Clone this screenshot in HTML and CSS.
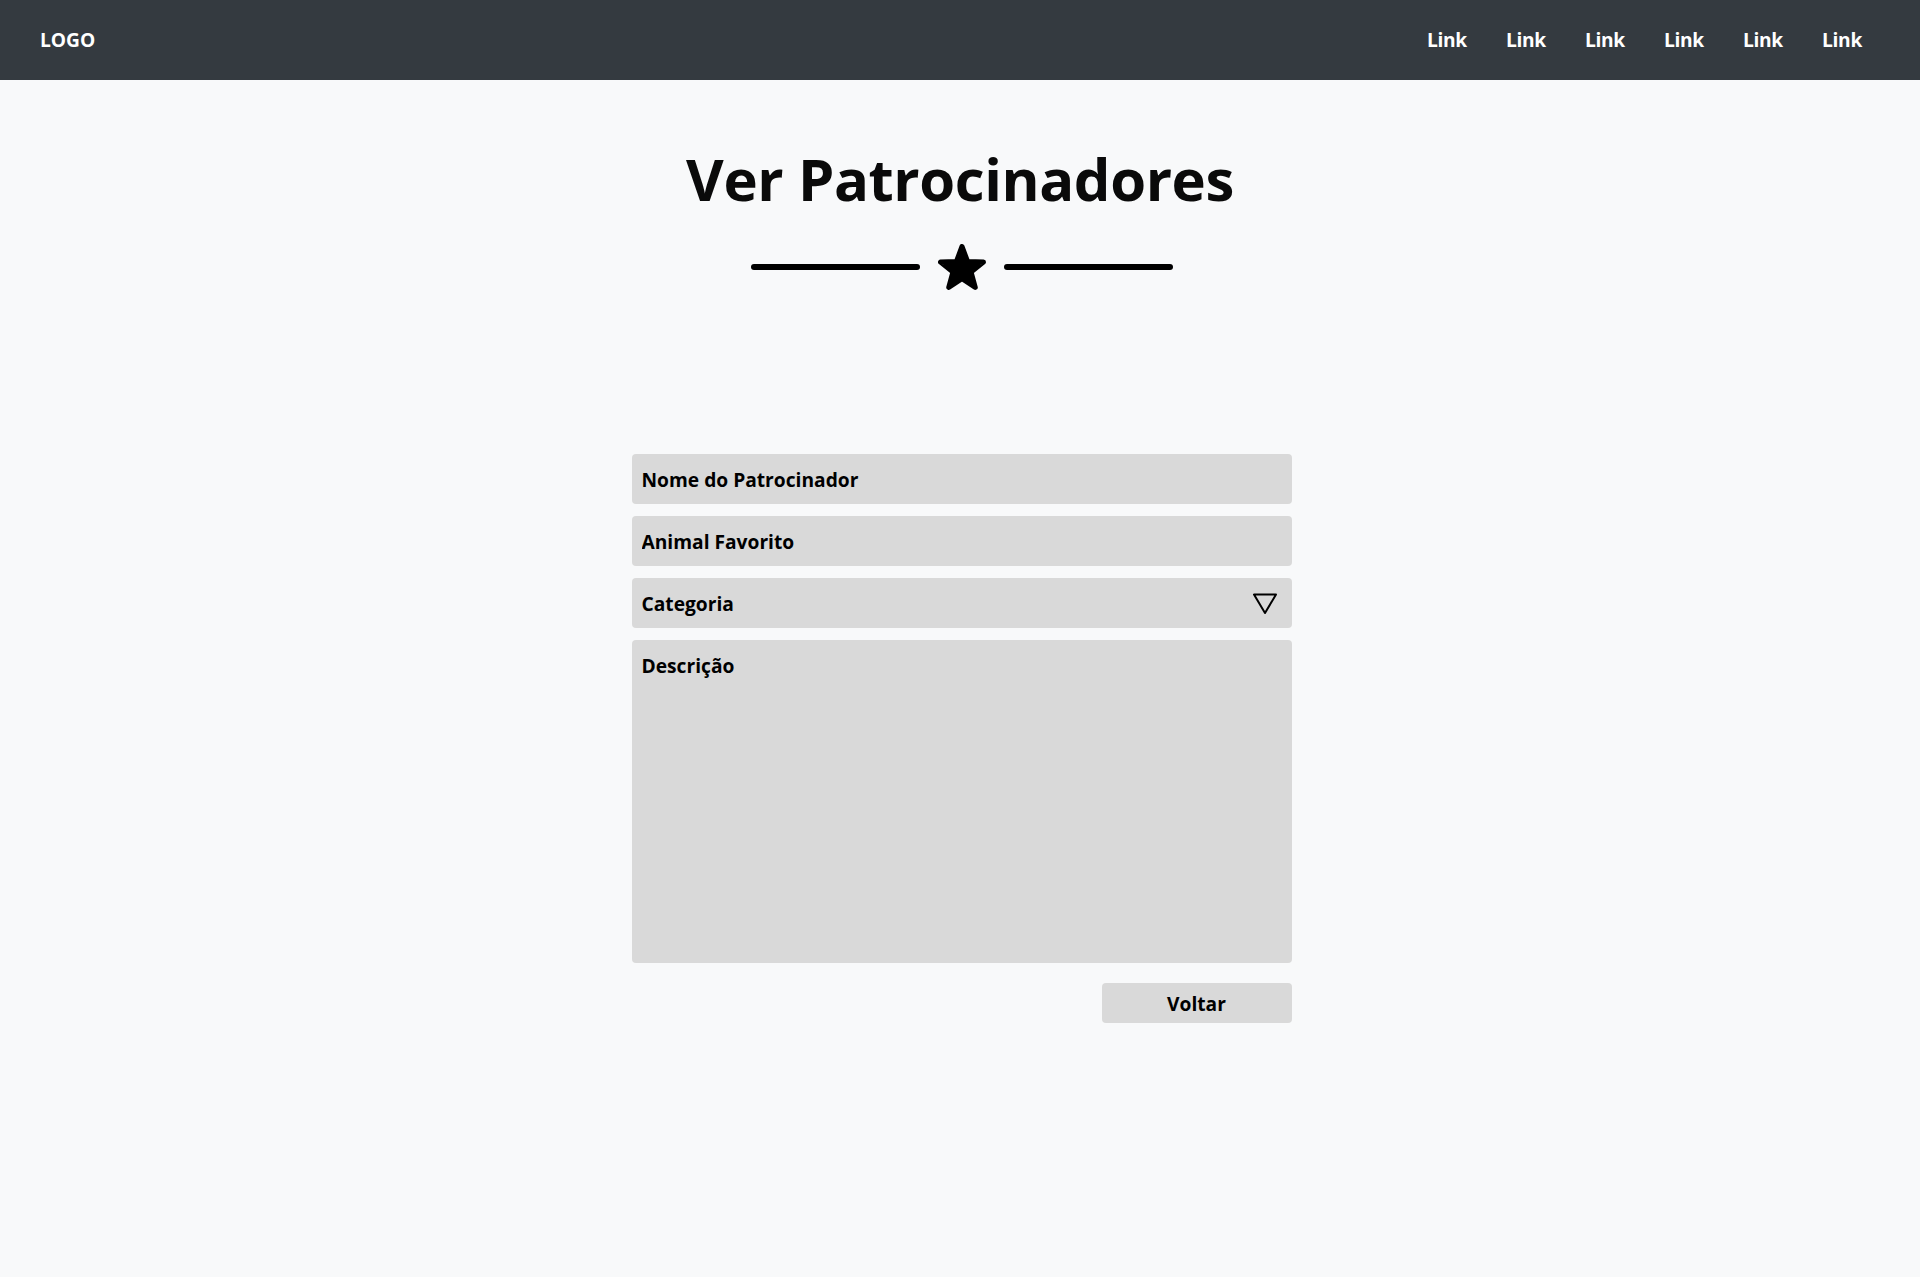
FILE: index.html
```html
<!DOCTYPE html>
<html lang="pt">
<head>
<meta charset="utf-8">
<title>Ver Patrocinadores</title>
<link rel="stylesheet" href="styles.css">
</head>
<body>
<header class="navbar">
  <a class="logo" href="#">LOGO</a>
  <nav class="nav-links">
    <a href="#">Link</a>
    <a href="#">Link</a>
    <a href="#">Link</a>
    <a href="#">Link</a>
    <a href="#">Link</a>
    <a href="#">Link</a>
  </nav>
</header>
<main class="page">
  <h1 class="title">Ver Patrocinadores</h1>
  <div class="divider">
    <span class="divider-line"></span>
    <svg class="divider-star" viewBox="0 0 48 46" width="48" height="46" aria-hidden="true">
      <polygon points="24,2.5 29.58,17.41 45.49,18.12 33.04,28.04 37.28,43.38 24,34.6 10.72,43.38 14.96,28.04 2.51,18.12 18.42,17.41" fill="#000" stroke="#000" stroke-width="5" stroke-linejoin="round"/>
    </svg>
    <span class="divider-line"></span>
  </div>
  <form class="form">
    <input class="field" type="text" placeholder="Nome do Patrocinador">
    <input class="field" type="text" placeholder="Animal Favorito">
    <div class="field field-select">
      <span>Categoria</span>
      <svg class="select-arrow" viewBox="0 0 26 23" width="26" height="23" aria-hidden="true">
        <polygon points="2,2.5 24,2.5 13,21" fill="none" stroke="#000" stroke-width="2" stroke-linejoin="round"/>
      </svg>
    </div>
    <textarea class="field field-textarea" placeholder="Descrição"></textarea>
    <div class="actions">
      <button class="btn" type="button">Voltar</button>
    </div>
  </form>
</main>
</body>
</html>
```
FILE: styles.css
```css
* {
  box-sizing: border-box;
}

html, body {
  margin: 0;
  padding: 0;
}

body {
  background: #f8f9fa;
  min-height: 1277px;
  font-family: "Open Sans", "Lato", sans-serif;
  font-weight: 700;
  color: #000;
}

.navbar {
  height: 80px;
  background: #343a40;
  display: flex;
  align-items: center;
  justify-content: space-between;
  padding: 0 38.5px 0 40px;
}

.logo {
  color: #fff;
  text-decoration: none;
  font-size: 19.2px;
  font-weight: 700;
  margin-top: -1px;
}

.nav-links {
  display: flex;
  margin-top: -1px;
}

.nav-links a {
  color: #fff;
  text-decoration: none;
  font-size: 19.2px;
  font-weight: 700;
  letter-spacing: -0.3px;
  padding: 0 19.5px;
}

.page {
  display: flex;
  flex-direction: column;
  align-items: center;
  padding-top: 63px;
}

.title {
  margin: 0;
  font-size: 58px;
  line-height: 72px;
  letter-spacing: -0.4px;
  font-weight: 700;
  color: #0a0a0a;
}

.divider {
  display: flex;
  align-items: center;
  gap: 18px;
  margin-top: 29px;
  margin-left: 3px;
}

.divider-line {
  width: 169px;
  height: 6px;
  border-radius: 3px;
  background: #000;
}

.divider-star {
  display: block;
}

.form {
  width: 660px;
  margin-top: 164px;
  margin-left: 3px;
  display: flex;
  flex-direction: column;
  gap: 12px;
}

.field {
  display: block;
  width: 100%;
  height: 50px;
  border: none;
  border-radius: 4px;
  background: #d9d9d9;
  padding: 0 10px;
  font-family: inherit;
  font-size: 19.2px;
  font-weight: 700;
  color: #000;
  outline: none;
}

.field::placeholder {
  color: #000;
  opacity: 1;
}

.field-select {
  display: flex;
  align-items: center;
  justify-content: space-between;
  padding-right: 14px;
}

.select-arrow {
  display: block;
}

.field-textarea {
  height: 323px;
  padding-top: 14px;
  resize: none;
  line-height: 1.2;
}

.actions {
  display: flex;
  justify-content: flex-end;
  margin-top: 8px;
}

.btn {
  width: 190px;
  height: 40px;
  border: none;
  border-radius: 4px;
  background: #d9d9d9;
  font-family: inherit;
  font-size: 19.2px;
  font-weight: 700;
  color: #000;
}
```
